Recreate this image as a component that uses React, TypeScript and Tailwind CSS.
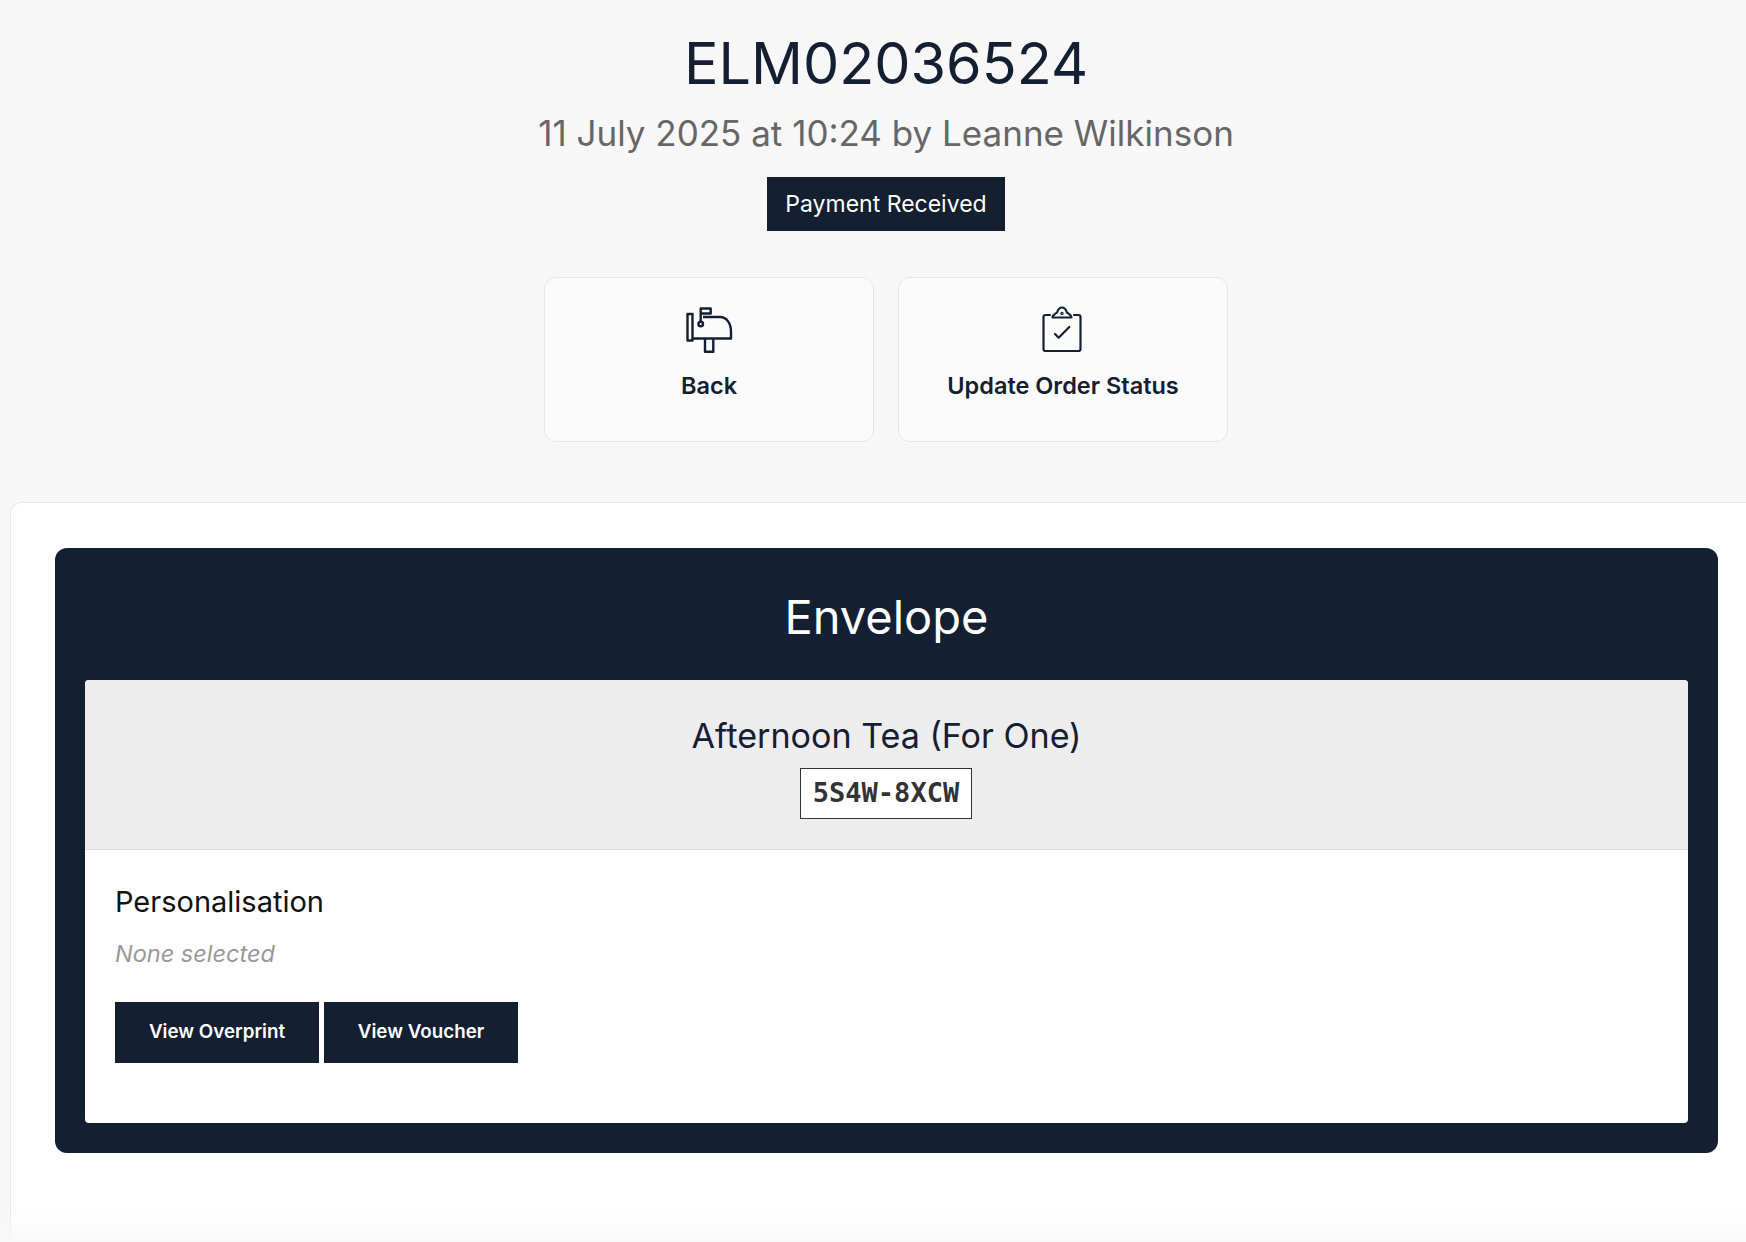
function MailboxIcon() {
  return (
    <svg viewBox="0 0 48 48" className="h-12 w-12 text-[#142032]" fill="none" stroke="currentColor" strokeWidth="2.400" strokeLinejoin="round">
      <rect x="2.500" y="8" width="5" height="26.500" />
      <path d="M18 11H35c6.500 0 11 6 11 15v6.500H7.500" />
      <path d="M15.700 16V2.500h10v5h-10" />
      <circle cx="15.700" cy="18" r="2.300" />
      <path d="M20 32.500v13.200h8.300V32.500" />
    </svg>
  );
}

function ClipboardIcon() {
  return (
    <svg viewBox="0 0 48 48" className="h-12 w-12 text-[#142032]" fill="none" stroke="currentColor" strokeWidth="2.200" strokeLinecap="round" strokeLinejoin="round">
      <path d="M11 9H6.500a2 2 0 0 0-2 2v32a2 2 0 0 0 2 2h33a2 2 0 0 0 2-2V11a2 2 0 0 0-2-2H35" />
      <path d="M13.500 11.500h19c0-3-3.500-4-4.500-5-1-3-3-5-5-5s-4 2-5 5c-1 1-4.500 2-4.500 5z" />
      <path d="M16 28l3.700 3.700L30.300 21" />
      <circle cx="23" cy="7.500" r="0.600" />
    </svg>
  );
}

function ActionCard({ label, icon }: { label: string; icon: React.ReactNode }) {
  return (
    <a className="flex h-[165px] w-[330px] flex-col items-center rounded-xl border border-[#e6e6e6] bg-[#fbfbfb] pt-7">
      {icon}
      <span className="mt-4 text-[23.500px] leading-8 font-semibold text-[#142032]">{label}</span>
    </a>
  );
}

export default function App() {
  return (
    <div className="relative h-[1242px] overflow-hidden bg-[#f7f7f7] font-['Inter',sans-serif]">
      <header className="flex h-[502px] flex-col items-center pt-[25px] pl-[26px]">
        <h1 className="text-[57.500px] leading-[76px] font-normal text-[#142032]">ELM02036524</h1>
        <p className="mt-[9px] text-[35px] leading-[46px] text-[#666666]">11 July 2025 at 10:24 by Leanne Wilkinson</p>
        <span className="mt-[21px] flex h-[54px] w-[238px] items-center justify-center bg-[#142032] text-[23px] text-white">
          Payment Received
        </span>
        <div className="mt-[46px] flex gap-6">
          <ActionCard label="Back" icon={<MailboxIcon />} />
          <ActionCard label="Update Order Status" icon={<ClipboardIcon />} />
        </div>
      </header>

      <main className="ml-[10px] h-[740px] rounded-tl-xl border-t border-l border-[#e8e8e8] bg-white pt-[45px] pr-[28px] pl-[44px]">
        <section className="h-[605px] rounded-xl bg-[#142032] px-[30px]">
          <h2 className="pt-[35px] pb-[29px] text-center text-[47px] leading-[68px] font-normal text-white">Envelope</h2>
          <div className="h-[443px] overflow-hidden rounded bg-white">
            <div className="flex h-[170px] flex-col items-center border-b border-[#dddddd] bg-[#ededed] pt-[33px]">
              <h3 className="text-[34.100px] leading-[46px] font-normal text-[#142032]">Afternoon Tea (For One)</h3>
              <code className="mt-[9px] mr-[1px] flex h-[51px] w-[172px] items-center justify-center border border-[#333333] bg-white font-['DejaVu_Sans_Mono',monospace] text-[27px] font-bold text-[#333333]">
                5S4W-8XCW
              </code>
            </div>
            <div className="px-[30px] pt-[32px]">
              <h4 className="text-[29px] leading-10 font-normal text-[#111111]">Personalisation</h4>
              <p className="mt-[16px] text-[23.500px] leading-8 text-[#999999] italic">None selected</p>
              <div className="mt-[32px] flex gap-[5px]">
                <button className="h-[61px] w-[204px] bg-[#142032] text-[18.800px] font-semibold text-white">View Overprint</button>
                <button className="h-[61px] w-[194px] bg-[#142032] text-[18.800px] font-semibold text-white">View Voucher</button>
              </div>
            </div>
          </div>
        </section>
      </main>

      <div className="absolute inset-x-0 bottom-0 h-[30px] bg-gradient-to-b from-transparent to-[#f9f9f9]" />
    </div>
  );
}
